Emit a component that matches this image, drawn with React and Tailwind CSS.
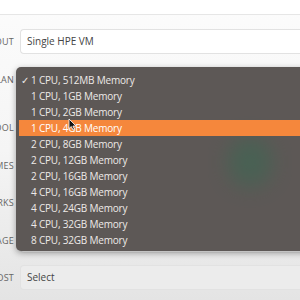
import React from 'react';

const plans = [
  '1 CPU, 512MB Memory',
  '1 CPU, 1GB Memory',
  '1 CPU, 2GB Memory',
  '1 CPU, 4GB Memory',
  '2 CPU, 8GB Memory',
  '2 CPU, 12GB Memory',
  '2 CPU, 16GB Memory',
  '4 CPU, 16GB Memory',
  '4 CPU, 24GB Memory',
  '4 CPU, 32GB Memory',
  '8 CPU, 32GB Memory',
];

function Row({ label, children, className = '' }) {
  return (
    <div className={`flex items-center h-[25px] ${className}`}>
      <div className="w-[14px] shrink-0 flex justify-end">
        <span className="whitespace-nowrap text-[9px] tracking-wide text-[#666]">{label}</span>
      </div>
      <div className="ml-[6px] flex-1 h-full">{children}</div>
    </div>
  );
}

function Field({ value, focused, dim }) {
  return (
    <div
      className={`h-full rounded-l-[4px] border border-r-0 flex items-center pl-[6px] text-[10px] text-[#444] ${
        focused ? 'border-[#7cc4c0]' : 'border-[#e2e2e2]'
      } ${dim ? 'bg-[#ececec]' : 'bg-white'}`}
    >
      {value}
    </div>
  );
}

export default function App() {
  return (
    <div className="relative w-[300px] h-[300px] overflow-hidden bg-gradient-to-b from-[#fcfcfc] via-[#f5f5f5] to-[#e4e4e4] font-['Open_Sans',sans-serif]">
      <div className="h-[15px] border-b border-[#e6e6e6] bg-white" />

      <div className="flex flex-col">
        <Row label="LAYOUT" className="mt-[14px]">
          <Field value="Single HPE VM" />
        </Row>
        <Row label="PLAN" className="mt-[13px]">
          <Field value="" focused />
        </Row>
        <Row label="RESOURCE POOL" className="mt-[23px]">
          <Field value="" />
        </Row>
        <Row label="VOLUMES" className="mt-[13px]">
          <Field value="" />
        </Row>
        <Row label="NETWORKS" className="mt-[12px]">
          <Field value="" />
        </Row>
        <Row label="IMAGE" className="mt-[13px]">
          <Field value="" />
        </Row>
        <Row label="HOST" className="mt-[12px]">
          <Field value="Select" dim />
        </Row>
      </div>

      {/* open plan dropdown */}
      <div className="absolute left-[16px] top-[67px] w-[300px] h-[184px] rounded-[5px] bg-[#5d5856] shadow-[0_2px_6px_rgba(0,0,0,0.35)] pt-[5px] overflow-hidden">
        <div className="absolute left-[212px] top-[70px] w-[44px] h-[50px] rounded-full bg-[#416553] blur-[10px] opacity-70" />
        {plans.map((p, i) => (
          <div
            key={p}
            className={`relative h-[16px] flex items-center text-[10px] tracking-[-0.2px] leading-none ${
              i === 3 ? 'bg-[#f5873c] text-white ml-[3px]' : 'text-[#eeeae8]'
            }`}
          >
            <span className={`w-[15px] text-right pr-[2px] ${i === 3 ? 'ml-[-3px]' : ''}`}>{i === 0 ? '✓' : ''}</span>
            <span>{p}</span>
          </div>
        ))}
      </div>

      {/* mouse cursor */}
      <svg className="absolute left-[68px] top-[118px]" width="9" height="13" viewBox="0 0 9 13">
        <path d="M1 1 L1 10.5 L3.3 8.5 L5 12 L6.5 11.3 L4.9 8 L8 8 Z" fill="#111" stroke="#fff" strokeWidth="0.8" />
      </svg>
    </div>
  );
}
